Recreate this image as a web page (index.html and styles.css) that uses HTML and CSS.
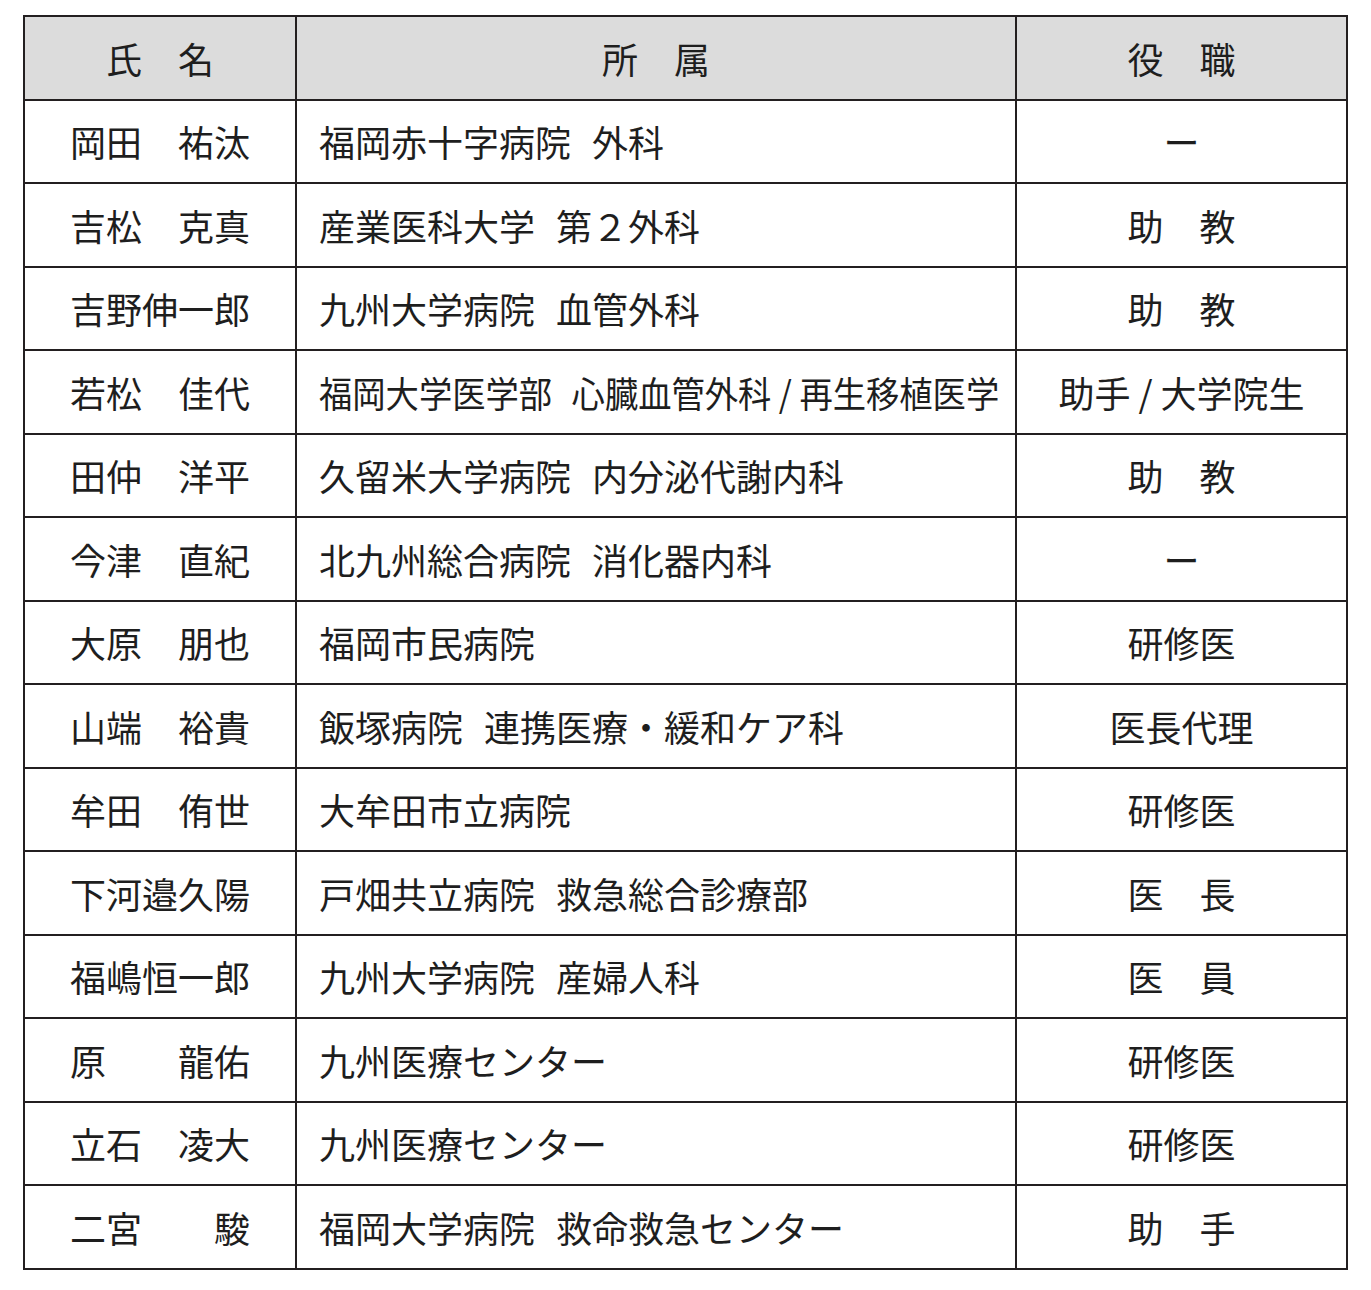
FILE: index.html
```html
<!DOCTYPE html>
<html lang="ja">
<head>
<meta charset="utf-8">
<title>名簿</title>
<link rel="stylesheet" href="styles.css">
</head>
<body>
<table class="roster">
  <colgroup>
    <col class="c-name">
    <col class="c-aff">
    <col class="c-role">
  </colgroup>
  <thead>
    <tr>
      <th>氏　名</th>
      <th>所　属</th>
      <th>役　職</th>
    </tr>
  </thead>
  <tbody>
    <tr><td class="name">岡田　祐汰</td><td class="aff">福岡赤十字病院 外科</td><td class="role">ー</td></tr>
    <tr><td class="name">吉松　克真</td><td class="aff">産業医科大学 第２外科</td><td class="role">助　教</td></tr>
    <tr><td class="name">吉野伸一郎</td><td class="aff">九州大学病院 血管外科</td><td class="role">助　教</td></tr>
    <tr><td class="name">若松　佳代</td><td class="aff"><span class="tight">福岡大学医学部 心臓血管外科<span class="sl"> / </span>再生移植医学</span></td><td class="role">助手 / 大学院生</td></tr>
    <tr><td class="name">田仲　洋平</td><td class="aff">久留米大学病院 内分泌代謝内科</td><td class="role">助　教</td></tr>
    <tr><td class="name">今津　直紀</td><td class="aff">北九州総合病院 消化器内科</td><td class="role">ー</td></tr>
    <tr><td class="name">大原　朋也</td><td class="aff">福岡市民病院</td><td class="role">研修医</td></tr>
    <tr><td class="name">山端　裕貴</td><td class="aff">飯塚病院 連携医療・緩和ケア科</td><td class="role">医長代理</td></tr>
    <tr><td class="name">牟田　侑世</td><td class="aff">大牟田市立病院</td><td class="role">研修医</td></tr>
    <tr><td class="name">下河邉久陽</td><td class="aff">戸畑共立病院 救急総合診療部</td><td class="role">医　長</td></tr>
    <tr><td class="name">福嶋恒一郎</td><td class="aff">九州大学病院 産婦人科</td><td class="role">医　員</td></tr>
    <tr><td class="name">原　　龍佑</td><td class="aff">九州医療センター</td><td class="role">研修医</td></tr>
    <tr><td class="name">立石　凌大</td><td class="aff">九州医療センター</td><td class="role">研修医</td></tr>
    <tr><td class="name">二宮　　駿</td><td class="aff">福岡大学病院 救命救急センター</td><td class="role">助　手</td></tr>
  </tbody>
</table>
</body>
</html>
```

FILE: styles.css
```css
html, body {
  margin: 0;
  padding: 0;
  background: #ffffff;
}

body {
  padding: 15px 0 0 23px;
  font-family: "Noto Sans CJK JP", "Noto Sans", sans-serif;
  color: #1e1e1e;
}

.roster {
  border-collapse: collapse;
  table-layout: fixed;
  width: 1325px;
  font-size: 36px;
  line-height: 1;
}

.c-name { width: 272px; }
.c-aff  { width: 720px; }
.c-role { width: 331px; }

.roster th,
.roster td {
  border: 2px solid #231f20;
  height: 81.5px;
  padding: 0;
  vertical-align: middle;
  white-space: nowrap;
  overflow: hidden;
}

.roster th {
  background: #dcdcdc;
  font-weight: 400;
  text-align: center;
}

.name {
  text-align: center;
}

.aff {
  text-align: left;
  padding-left: 22px !important;
  word-spacing: 13px;
}

.role {
  text-align: center;
}

.tight {
  display: inline-block;
  transform: scaleX(0.925);
  transform-origin: left center;
}

.sl {
  word-spacing: 0;
}
```
